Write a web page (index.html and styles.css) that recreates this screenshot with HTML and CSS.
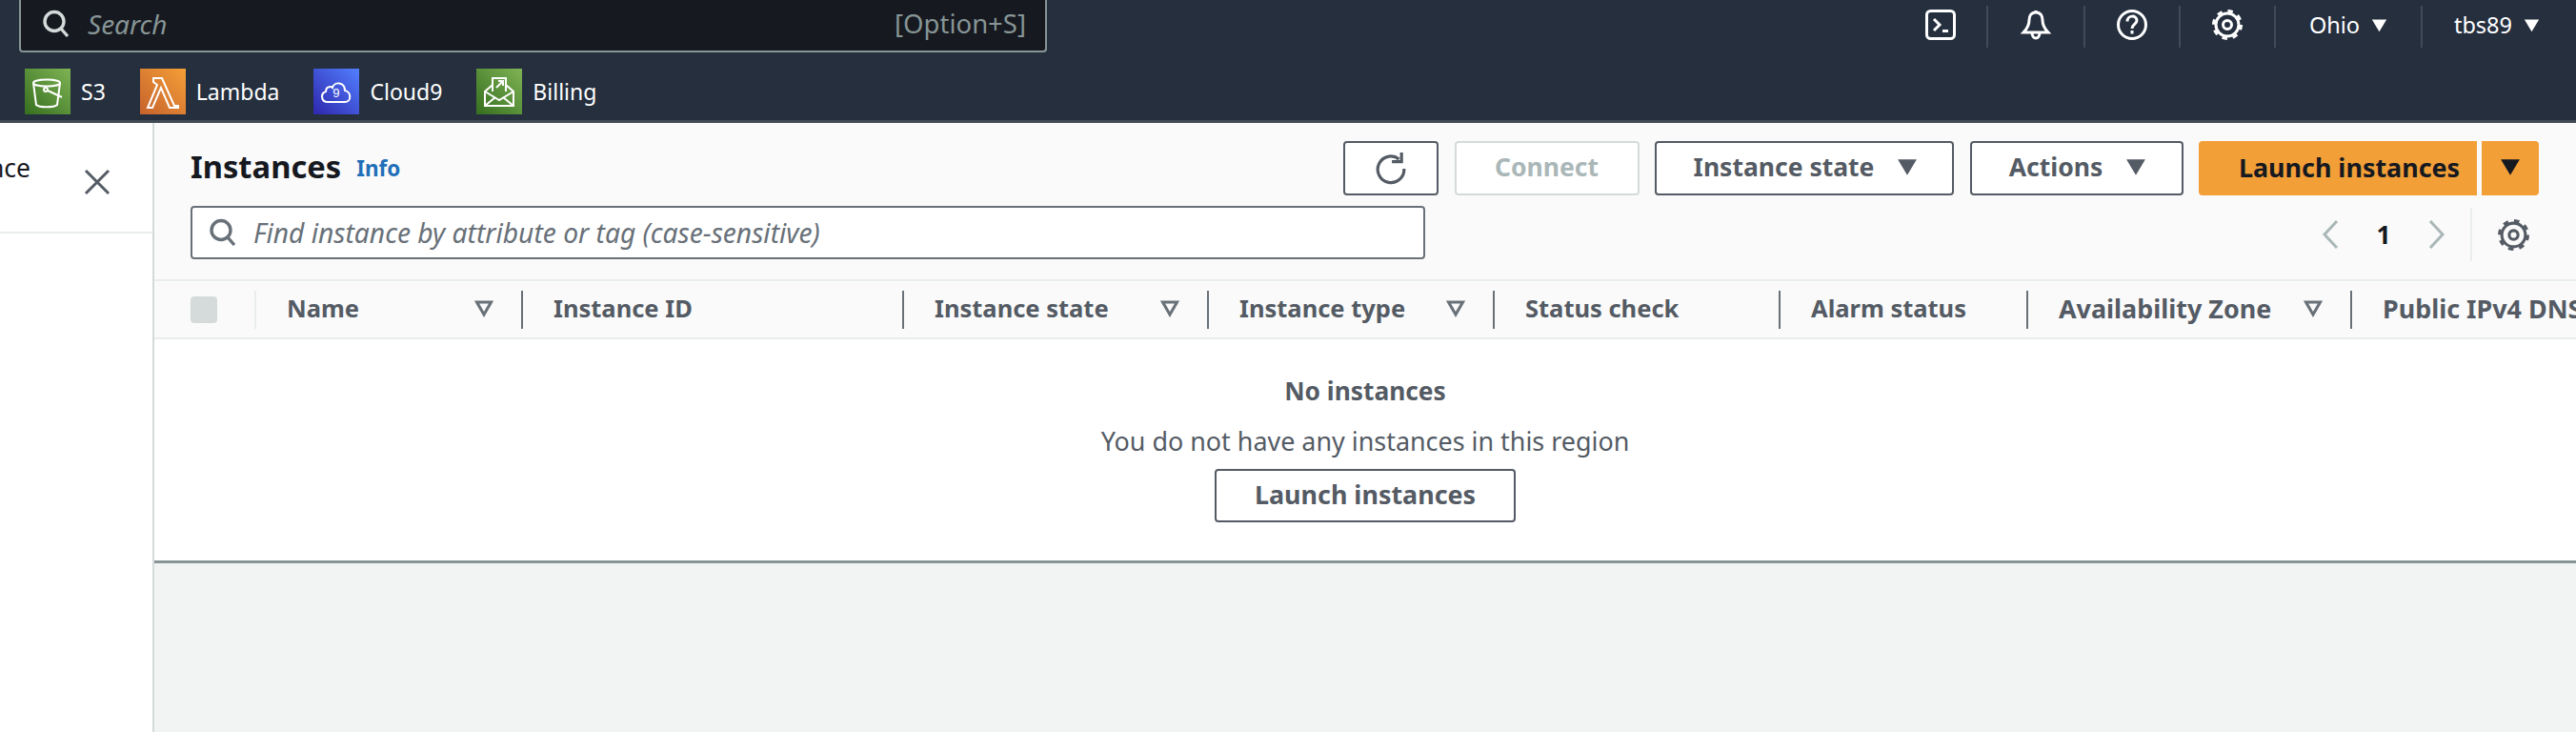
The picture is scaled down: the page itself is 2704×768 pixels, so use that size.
FILE: index.html
```html
<!DOCTYPE html>
<html lang="en">
<head>
    <meta charset="UTF-8">
    <title>Instances | EC2 Management Console</title>
    <link rel="stylesheet" href="styles.css">
</head>
<body>
    <svg class="defs" width="0" height="0" aria-hidden="true">
        <symbol id="gear" viewBox="0 0 32 32">
            <circle cx="16" cy="16" r="12" fill="none" stroke="currentColor" stroke-width="3"/>
            <circle cx="16" cy="16" r="14.5" fill="none" stroke="currentColor" stroke-width="3" stroke-dasharray="5.4 5.99"/>
            <circle cx="16" cy="16" r="4.5" fill="none" stroke="currentColor" stroke-width="3"/>
        </symbol>
        <symbol id="search" viewBox="0 0 30 30">
            <circle cx="13" cy="12.5" r="10" fill="none" stroke="currentColor" stroke-width="3.4"/>
            <path d="M20 20l7 8" fill="none" stroke="currentColor" stroke-width="3.4"/>
        </symbol>
        <symbol id="caret" viewBox="0 0 20 20">
            <path d="M1 3h18l-9 15z" fill="currentColor"/>
        </symbol>
        <symbol id="filter" viewBox="0 0 20 20">
            <path d="M2.5 4h15l-7.500 13z" fill="none" stroke="currentColor" stroke-width="3"/>
        </symbol>
    </svg>

    <!-- top nav -->
    <header class="topbar">
        <div class="topbar-row">
            <div class="global-search">
                <svg class="global-search-icon"><use href="#search"/></svg>
                <span class="global-search-text">Search</span>
                <span class="global-search-key">[Option+S]</span>
            </div>
            <nav class="utilities">
                <div class="util util-terminal">
                    <svg class="util-icon" viewBox="0 0 32 32" fill="none" stroke="currentColor" stroke-width="3">
                        <rect x="1.500" y="1.500" width="29" height="29" rx="4"/>
                        <path d="M9 10l6 6-6 6M18 22.500h6"/>
                    </svg>
                </div>
                <div class="util">
                    <svg class="util-icon" viewBox="0 0 32 32" fill="none" stroke="currentColor" stroke-width="3">
                        <path d="M16 3c-5 0-7 4-7 8 0 6-2 9-6 13h26c-4-4-6-7-6-13 0-4-2-8-7-8z"/>
                        <path d="M16 1v2M12 24c0 8 8 8 8 0"/>
                    </svg>
                </div>
                <div class="util util-narrow">
                    <svg class="util-icon" viewBox="0 0 32 32" fill="none" stroke="currentColor" stroke-width="3">
                        <circle cx="16" cy="16" r="14.500"/>
                        <path d="M11 12.500c0-7 10-7 10-1 0 4-5 4-5 8.500M16 22v3.500"/>
                    </svg>
                </div>
                <div class="util util-narrow">
                    <svg class="util-icon"><use href="#gear"/></svg>
                </div>
                <div class="util util-menu util-region">Ohio <svg class="util-caret"><use href="#caret"/></svg></div>
                <div class="util util-menu util-user">tbs89 <svg class="util-caret"><use href="#caret"/></svg></div>
            </nav>
        </div>
        <div class="shortcuts">
            <a class="shortcut">
                <span class="tile tile-green">
                    <svg viewBox="0 0 48 48" fill="none" stroke="#fff" stroke-width="2">
                        <ellipse cx="23" cy="15" rx="14" ry="3.500"/>
                        <path d="M9 15l3 23c3 3 19 3 22 0l3-23"/>
                        <circle cx="22" cy="22" r="2"/>
                        <path d="M24 23l15 7"/>
                    </svg>
                </span>
                S3
            </a>
            <a class="shortcut">
                <span class="tile tile-orange">
                    <svg viewBox="0 0 48 48" fill="none" stroke="#fff" stroke-width="2">
                        <path d="M14 10h9l13 29h4v2h-9L22 20l-9 21H8l10-24-4-3z"/>
                    </svg>
                </span>
                Lambda
            </a>
            <a class="shortcut">
                <span class="tile tile-blue">
                    <svg viewBox="0 0 48 48" fill="none" stroke="#fff" stroke-width="2">
                        <path d="M15 35c-7 0-8-9-2-11 0-5 5-6 7-4 2-7 13-6 13 3 7 1 7 12 0 12z"/>
                        <text x="24" y="30" class="tile-text">9</text>
                    </svg>
                </span>
                Cloud9
            </a>
            <a class="shortcut">
                <span class="tile tile-green">
                    <svg viewBox="0 0 48 48" fill="none" stroke="#fff" stroke-width="2">
                        <path d="M17 24V10h14v14"/>
                        <path d="M21 20l7-7M23 13h5v5"/>
                        <path d="M17 17L9 24v15h30V24l-8-7"/>
                        <path d="M9 24l15 9 15-9M9 39l11-9M39 39l-11-9"/>
                    </svg>
                </span>
                Billing
            </a>
        </div>
    </header>

    <div class="console">
        <!-- side notice, mostly cut off -->
        <aside class="sidebar">
            <div class="sidebar-head">
                <div class="sidebar-text"><span>Experience</span></div>
                <svg class="sidebar-close" viewBox="0 0 28 28" fill="none" stroke="currentColor" stroke-width="3">
                    <path d="M2 2l24 24M26 2L2 26"/>
                </svg>
            </div>
        </aside>

        <main class="main">
            <section class="panel">
                <div class="panel-head">
                    <div class="title-row">
                        <h1>Instances</h1>
                        <a class="info">Info</a>
                        <div class="actions">
                            <button class="btn btn-icon" type="button">
                                <svg viewBox="0 0 32 32" fill="none" stroke="currentColor" stroke-width="3">
                                    <path d="M24 6.500a13 13 0 1 0 5 9.500"/>
                                    <path d="M17 8h9.500V-1" transform="translate(0 1)"/>
                                </svg>
                            </button>
                            <button class="btn btn-connect" type="button">Connect</button>
                            <button class="btn btn-state" type="button">Instance state <svg class="btn-caret"><use href="#caret"/></svg></button>
                            <button class="btn btn-actions" type="button">Actions <svg class="btn-caret"><use href="#caret"/></svg></button>
                            <div class="launch">
                                <button class="launch-main" type="button">Launch instances</button>
                                <button class="launch-more" type="button"><svg class="btn-caret"><use href="#caret"/></svg></button>
                            </div>
                        </div>
                    </div>
                    <div class="filter-row">
                        <div class="find">
                            <svg class="find-icon"><use href="#search"/></svg>
                            <span>Find instance by attribute or tag (case-sensitive)</span>
                        </div>
                        <div class="pager">
                            <svg class="pager-arrow" viewBox="0 0 18 30" fill="none" stroke="currentColor" stroke-width="3"><path d="M16 1L3 15l13 14"/></svg>
                            <span class="pager-num">1</span>
                            <svg class="pager-arrow" viewBox="0 0 18 30" fill="none" stroke="currentColor" stroke-width="3"><path d="M2 1l13 14L2 29"/></svg>
                            <div class="pager-settings">
                                <svg class="pager-gear"><use href="#gear"/></svg>
                            </div>
                        </div>
                    </div>
                </div>

                <div class="table-head">
                    <div class="col col-check"><span class="checkbox"></span></div>
                    <div class="col col-first"><span>Name</span><svg class="filter"><use href="#filter"/></svg></div>
                    <div class="col"><span>Instance ID</span></div>
                    <div class="col"><span>Instance state</span><svg class="filter"><use href="#filter"/></svg></div>
                    <div class="col"><span>Instance type</span><svg class="filter"><use href="#filter"/></svg></div>
                    <div class="col"><span>Status check</span></div>
                    <div class="col"><span>Alarm status</span></div>
                    <div class="col col-wide"><span>Availability Zone</span><svg class="filter"><use href="#filter"/></svg></div>
                    <div class="col col-wide"><span>Public IPv4 DNS</span></div>
                </div>

                <div class="empty">
                    <strong>No instances</strong>
                    <p>You do not have any instances in this region</p>
                    <button class="btn btn-launch" type="button">Launch instances</button>
                </div>
            </section>
        </main>
    </div>
</body>
</html>
```

FILE: styles.css
```css
* {
    box-sizing: border-box;
}
html, body {
    height: 100%;
}
body {
    margin: 0;
    display: flex;
    flex-direction: column;
    overflow: hidden;
    font-family: "Noto Sans", Arial, sans-serif;
    font-size: 26.5px;
    color: #16191f;
    background: #f2f3f3;
}
.defs {
    position: absolute;
}
button {
    font: inherit;
}

/* top nav */
.topbar {
    flex: none;
    height: 129px;
    background: #252f3e;
    border-bottom: 3px solid #414a56;
    color: #fff;
}
.topbar-row {
    display: flex;
    justify-content: space-between;
    height: 55px;
    padding-left: 20px;
}
.global-search {
    width: 1079px;
    height: 55px;
    display: flex;
    align-items: center;
    padding: 0 20px 4px 22px;
    background: #16191f;
    border: 2px solid #879596;
    border-top: none;
    border-radius: 0 0 4px 4px;
    color: #879596;
    font-size: 28px;
}
.global-search-icon {
    width: 30px;
    height: 30px;
    margin-right: 18px;
    color: #d5dbdb;
}
.global-search-text {
    font-style: italic;
    flex: 1;
}
.global-search-key {
    font-size: 27.5px;
}
.utilities {
    display: flex;
    align-items: center;
    height: 55px;
    padding-right: 38px;
}
.util {
    display: flex;
    align-items: center;
    justify-content: center;
    width: 102px;
    height: 44px;
    padding-bottom: 3px;
    border-left: 2px solid #414a56;
    font-size: 23.5px;
}
.util-terminal {
    width: 64px;
    border-left: none;
    justify-content: flex-start;
}
.util-narrow {
    width: 100px;
}
.util-icon {
    width: 32px;
    height: 32px;
}
.util-menu {
    gap: 12px;
}
.util-region {
    width: 154px;
}
.util-user {
    width: 125px;
    justify-content: flex-end;
}
.util-caret {
    width: 17px;
    height: 17px;
    color: #fff;
}

.shortcuts {
    display: flex;
    gap: 36px;
    padding: 17px 0 0 26px;
}
.shortcut {
    display: flex;
    align-items: center;
    gap: 11px;
    font-size: 23px;
}
.tile {
    width: 48px;
    height: 48px;
    display: block;
}
.tile svg {
    display: block;
    width: 48px;
    height: 48px;
}
.tile-text {
    font-family: "Liberation Mono", monospace;
    font-size: 13px;
    fill: #fff;
    stroke: none;
    text-anchor: middle;
}
.tile-green {
    background: linear-gradient(45deg, #356e1f, #7fb354);
}
.tile-orange {
    background: linear-gradient(45deg, #c6622c, #f49f38);
}
.tile-blue {
    background: linear-gradient(45deg, #2e27ad, #527fff);
}

/* layout */
.console {
    flex: 1;
    display: flex;
    min-height: 0;
}
.sidebar {
    flex: none;
    width: 162px;
    background: #fff;
    border-right: 2px solid #d5dbdb;
}
.sidebar-head {
    height: 116px;
    display: flex;
    justify-content: space-between;
    padding: 29px 44px 0 0;
    border-bottom: 2px solid #eaeded;
}
.sidebar-text {
    width: 32px;
    height: 36px;
    display: flex;
    justify-content: flex-end;
    overflow: hidden;
    white-space: nowrap;
}
.sidebar-close {
    width: 28px;
    height: 28px;
    margin-top: 19px;
    color: #545b64;
}
.main {
    flex: 1;
    min-width: 0;
    overflow: hidden;
}
.panel {
    background: #fff;
    border-bottom: 3px solid #879596;
}
.panel-head {
    height: 164px;
    padding: 19px 39px 0 38px;
    background: #fafafa;
}

/* title and buttons */
.title-row {
    display: flex;
    align-items: center;
    height: 57px;
}
h1 {
    margin: 0;
    font-size: 32.7px;
    line-height: 44px;
    font-weight: 700;
    padding-bottom: 4px;
}
.info {
    margin-left: 16px;
    font-size: 22.5px;
    font-weight: 700;
    color: #1f6fb8;
}
.actions {
    margin-left: auto;
    display: flex;
    gap: 16.500px;
}
.btn {
    height: 57px;
    display: flex;
    align-items: center;
    justify-content: center;
    gap: 22px;
    background: #fff;
    border: 2px solid #545b64;
    border-radius: 4px;
    color: #545b64;
    font-size: 26.5px;
    font-weight: 700;
    padding: 0 0 3px;
}
.btn-icon {
    width: 100px;
    padding: 0;
}
.btn-icon svg {
    width: 34px;
    height: 34px;
}
.btn-connect {
    width: 194px;
    border-color: #d5dbdb;
    color: #aab7b8;
}
.btn-state {
    width: 314px;
    padding-left: 5px;
}
.btn-actions {
    width: 224px;
    padding-left: 5px;
}
.btn-caret {
    width: 26px;
    height: 22px;
}
.launch {
    display: flex;
    gap: 5px;
}
.launch-main, .launch-more {
    height: 57px;
    border: none;
    background: #f39f38;
    color: #16191f;
    font-size: 26.9px;
    font-weight: 700;
    padding: 0 0 3px;
}
.launch-main {
    width: 292px;
    padding-left: 24px;
    border-radius: 4px 0 0 4px;
}
.launch-more {
    width: 60px;
    border-radius: 0 4px 4px 0;
    display: flex;
    align-items: center;
    justify-content: center;
}

/* search and pager */
.filter-row {
    display: flex;
    justify-content: space-between;
    margin-top: 11px;
}
.find {
    width: 1296px;
    height: 56px;
    display: flex;
    align-items: center;
    gap: 17px;
    padding-left: 17px;
    background: #fff;
    border: 2px solid #687078;
    border-radius: 4px;
    color: #687078;
    font-size: 28.2px;
    font-style: italic;
}
.find-icon {
    width: 30px;
    height: 30px;
    color: #687078;
    flex: none;
}
.pager {
    display: flex;
    align-items: center;
    height: 56px;
    margin: 2px 10px 0 0;
}
.pager-arrow {
    width: 18px;
    height: 30px;
    color: #aab7b8;
}
.pager-num {
    width: 94px;
    text-align: center;
    font-weight: 700;
}
.pager-settings {
    height: 56px;
    margin-left: 26px;
    padding-left: 27px;
    display: flex;
    align-items: center;
    border-left: 2px solid #eaeded;
}
.pager-gear {
    width: 33px;
    height: 33px;
    color: #545b64;
}

/* table */
.table-head {
    display: grid;
    grid-template-columns: 105px 280px 400px 320px 300px 300px 260px 340px 300px;
    align-items: center;
    height: 63px;
    background: #fafafa;
    border-top: 2px solid #eaeded;
    border-bottom: 2px solid #eaeded;
    color: #545b64;
    font-size: 25.5px;
    font-weight: 700;
    white-space: nowrap;
    overflow: hidden;
}
.col {
    height: 40px;
    display: flex;
    align-items: center;
    justify-content: space-between;
    padding: 0 29px 3px 32px;
    border-left: 2px solid #687078;
}
.col-wide {
    font-size: 26.9px;
}
.col-check {
    border-left: none;
    padding: 0 0 0 38px;
}
.col-first {
    border-left-color: #eaeded;
}
.checkbox {
    width: 28px;
    height: 28px;
    background: #d5dbdb;
    border-radius: 4px;
}
.filter {
    width: 20px;
    height: 20px;
    flex: none;
    color: #687078;
}

/* no rows */
.empty {
    height: 232px;
    display: flex;
    flex-direction: column;
    align-items: center;
    color: #545b64;
    padding-top: 36px;
}
.empty strong {
    font-size: 26.3px;
    line-height: 36px;
}
.empty p {
    margin: 17px 0 11px;
    font-size: 26.9px;
    line-height: 36px;
}
.btn-launch {
    width: 316px;
    height: 56px;
    font-size: 26.9px;
}
```
